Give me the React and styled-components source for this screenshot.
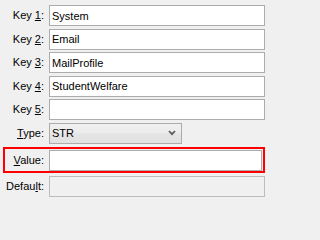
import React from "react";
import styled, { createGlobalStyle } from "styled-components";

const Global = createGlobalStyle`
  html, body { margin: 0; padding: 0; background: #f0f0f0; }
  body { font-family: "Liberation Sans", Arial, sans-serif; font-size: 11px; color: #000; }
`;

const Form = styled.div`
  display: flex;
  flex-direction: column;
  gap: 2.5px;
  padding: 5px 1px 0 3px;
  width: 266px;
  height: 202px;
  box-sizing: border-box;
  overflow: hidden;
`;

const Row = styled.div`
  display: grid;
  grid-template-columns: ${(p) => (p.$highlight ? "44px" : "46px")} 1fr;
  align-items: center;
  ${(p) =>
    p.$highlight &&
    `
    border: 2px solid #ff0000;
    padding: 1px 1px 0 0;
    margin-top: 1px;
    margin-bottom: 0.5px;
  `}
`;

const Label = styled.label`
  text-align: right;
  padding-right: 5px;
  white-space: nowrap;
  line-height: 13px;
  color: #000;
`;

const Key = styled.span`
  text-decoration: underline;
`;

const TextBox = styled.input`
  box-sizing: border-box;
  height: 21px;
  width: 100%;
  margin: 0;
  border: 1px solid #acacac;
  background: ${(p) => (p.disabled ? "#f0f0f0" : "#ffffff")};
  border-color: ${(p) => (p.disabled ? "#bcbcbc" : "#acacac")};
  padding: 0 2px;
  font-family: "Liberation Sans", Arial, sans-serif;
  font-size: 11px;
  color: #000;
  outline: none;
`;

const Combo = styled.div`
  box-sizing: border-box;
  height: 21px;
  width: 133px;
  border: 1px solid #acacac;
  background: linear-gradient(#f0f0f0 0%, #ececec 45%, #e4e4e4 55%, #e2e2e2 100%);
  display: flex;
  align-items: center;
  justify-content: space-between;
  padding: 0 5px 0 2px;
`;

const ComboText = styled.span`
  font-size: 11px;
`;

const Chevron = () => (
  <svg width="8" height="6" viewBox="0 0 8 6">
    <polyline points="1,1 4,4.2 7,1" fill="none" stroke="#5a5a5a" strokeWidth="1.8" />
  </svg>
);

const keys = ["System", "Email", "MailProfile", "StudentWelfare", ""];

export default function App() {
  return (
    <>
      <Global />
      <Form>
        {keys.map((v, i) => (
          <Row key={i}>
            <Label>
              Key <Key>{i + 1}</Key>:
            </Label>
            <TextBox defaultValue={v} readOnly />
          </Row>
        ))}
        <Row>
          <Label>
            <Key>T</Key>ype:
          </Label>
          <Combo>
            <ComboText>STR</ComboText>
            <Chevron />
          </Combo>
        </Row>
        <Row $highlight>
          <Label>
            <Key>V</Key>alue:
          </Label>
          <TextBox defaultValue="" readOnly />
        </Row>
        <Row>
          <Label>
            Defau<Key>l</Key>t:
          </Label>
          <TextBox defaultValue="" disabled />
        </Row>
      </Form>
    </>
  );
}
